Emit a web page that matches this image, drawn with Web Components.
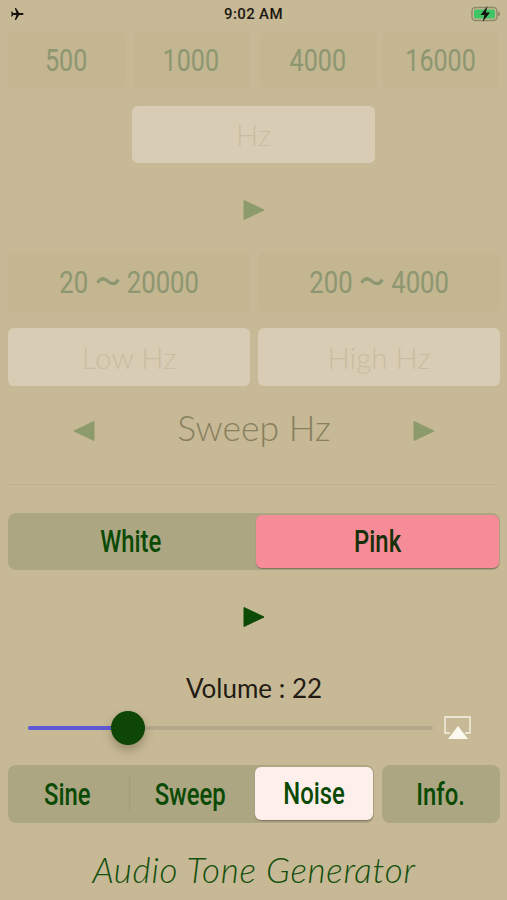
<!DOCTYPE html>
<html>
<head>
<meta charset="utf-8">
<style>
  html, body { margin: 0; padding: 0; background: #c7b995; }
  body { width: 507px; height: 900px; overflow: hidden; font-family: "Lato", "Liberation Sans", sans-serif; }
</style>
</head>
<body>
<tone-app></tone-app>
<script>
(function() {

  class StatusBar extends HTMLElement {
    constructor() {
      super();
      this.attachShadow({ mode: 'open' }).innerHTML = `
        <style>
          :host { display: flex; align-items: center; justify-content: space-between; height: 28px; padding: 0 7px 0 10px; position: relative; }
          .time { position: absolute; left: 0; right: 0; text-align: center; font: 500 15px "Roboto", sans-serif; color: #1b1712; letter-spacing: .35px; }
          svg { display: block; }
        </style>
        <svg width="14" height="14" viewBox="0 0 14 14"><path fill="#15120d" d="M13.6 7c0-.6-.8-1-1.6-1H9.2L6 1H4.800l1.600 5H3.200L2 4.500H1l.7 2.500L1 9.500h1l1.200-1.500h3.200L4.800 13H6l3.200-5H12c.8 0 1.600-.4 1.600-1z"/></svg>
        <span class="time">9:02 AM</span>
        <svg width="29" height="16" viewBox="0 0 29 16">
          <rect x="1" y="1.500" width="25" height="13" rx="3.500" fill="none" stroke="#8f8a6c" stroke-width="1.500"/>
          <rect x="3" y="3.500" width="21" height="9" rx="1.500" fill="#3fc566"/>
          <rect x="27" y="6" width="2" height="4" rx="1" fill="#8f8a6c"/>
          <path fill="#15120d" d="M16.500 0l-7 9h4l-2 7 7.500-9.500h-4.200z"/>
        </svg>`;
    }
  }

  class ToneButton extends HTMLElement {
    constructor() {
      super();
      this.attachShadow({ mode: 'open' }).innerHTML = `
        <style>
          :host { display: flex; align-items: center; justify-content: center; flex: 1 1 0; height: var(--h, 57px); border-radius: 6px; font-family: "Roboto", sans-serif; font-size: 31px; font-weight: 500; color: var(--fg, #0b4a05); background: var(--bg, transparent); white-space: nowrap; box-sizing: border-box; }
          :host([faded]) { --bg: #c3b691; --fg: #8d9670; font-weight: 400; }
          :host([selected]) { box-shadow: 0 1px 1px rgba(90,80,60,.55); }
          /* no condensed face is installed, so squeeze the text */
          span { display: inline-block; transform: scaleX(var(--squeeze, .77)); }
          :host([faded]) span { transform: scaleX(var(--squeeze, .81)); }
        </style>
        <span><slot></slot></span>`;
    }
  }

  class ToneField extends HTMLElement {
    constructor() {
      super();
      this.attachShadow({ mode: 'open' }).innerHTML = `
        <style>
          :host { display: flex; align-items: center; justify-content: center; flex: 1 1 0; height: var(--h, 57px); border-radius: 6px; background: #d8cdb4; color: #c8bda2; font: 300 29.500px "Lato", sans-serif; }
        </style>
        <slot></slot>`;
    }
  }

  class PlayArrow extends HTMLElement {
    constructor() {
      super();
      this.attachShadow({ mode: 'open' }).innerHTML = `
        <style>
          :host { display: block; width: 22px; height: 22px; color: var(--arrow, #8d9a6b); }
          :host([dir="left"]) svg { transform: scaleX(-1); }
          svg { display: block; }
        </style>
        <svg width="22" height="22" viewBox="0 0 22 22"><path fill="currentColor" stroke="currentColor" stroke-width="1" stroke-linejoin="round" d="M1 1.500v19L21 11z"/></svg>`;
    }
  }

  class VolumeSlider extends HTMLElement {
    constructor() {
      super();
      this.attachShadow({ mode: 'open' }).innerHTML = `
        <style>
          :host { display: flex; align-items: center; height: 36px; padding: 0 36px 0 28px; gap: 11px; }
          .track { flex: 1; height: 4px; border-radius: 2px; background: #b3a88c; position: relative; }
          .fill { position: absolute; left: 0; top: 0; bottom: 0; width: 100px; border-radius: 2px; background: #5f58d6; }
          .thumb { position: absolute; left: 83px; top: -15px; width: 34px; height: 34px; border-radius: 50%; background: #0d4605; box-shadow: 0 5px 10px rgba(70,60,40,.35); }
          svg { display: block; }
        </style>
        <div class="track"><div class="fill"></div><div class="thumb"></div></div>
        <svg width="27" height="24" viewBox="0 0 27 24">
          <path fill="none" stroke="#f7f3e8" stroke-width="1.300" d="M6 17H1V1h25v16h-5"/>
          <path fill="#fbf8ef" d="M14 10l10 13H4z"/>
        </svg>`;
    }
  }

  class ToneApp extends HTMLElement {
    constructor() {
      super();
      this.attachShadow({ mode: 'open' }).innerHTML = `
        <style>
          :host { display: block; padding: 0 7px 0 8px; }
          status-bar { margin: 0 -7px 0 -8px; }
          .row { display: flex; gap: 8px; }
          .center { display: flex; justify-content: center; padding-right: 1px; }
          .hz { width: 243px; margin-top: 18px; display: flex; }
          .first { margin-top: 4px; --h: 56px; gap: 0; }
          .first tone-button { flex: 0 0 117px; }
          .sweep { display: flex; align-items: center; justify-content: center; height: 44px; margin-top: 19px; padding: 0 65px; }
          .sweep span { flex: 1; text-align: center; font: 300 35.500px "Lato", sans-serif; color: #87805f; }
          .sweep play-arrow { margin-top: 8px; }
          hr { border: 0; height: 1px; background: #bdb08b; margin: 35px 4px 0 0; }
          .seg { display: flex; height: 57px; margin-top: 28px; border-radius: 8px; background: #aca683; }
          .seg.tabs { flex: 0 0 366px; height: 58px; margin: 0; }
          .white { padding-right: 3px; }
          .pink { --bg: #f58c97; --fg: #16300a; margin: 2px 1px 2px 0; --h: 53px; flex: 0 0 243px; }
          .noise { --bg: #fdf0ec; margin: 2px 1px 2px 0; --h: 53px; flex: 0 0 118px; }
          .info { --bg: #aca683; --h: 58px; flex: 0 0 118px; border-radius: 8px; }
          .play2 { --arrow: #0d4a07; }
          .volume { text-align: center; font: 400 26px "Lato", sans-serif; color: #231c13; margin-top: 45px; line-height: 30px; }
          .title { text-align: center; font: italic 300 35px "Lato", sans-serif; color: #14500e; margin-top: 26px; line-height: 40px; letter-spacing: .7px; }
          .sine { flex: 0 0 121px; padding-right: 3px; --h: 58px; }
          .sep { width: 1px; background: #a39d7b; margin: 10px 0; flex: none; }
          .sweep-tab { flex: 0 0 125px; padding-right: 4px; --h: 58px; }
        </style>
        <status-bar></status-bar>
        <div class="row first">
          <tone-button faded>500</tone-button>
          <tone-button faded style="margin-left:7.500px">1000</tone-button>
          <tone-button faded style="margin-left:10px">4000</tone-button>
          <tone-button faded style="margin-left:5.500px">16000</tone-button>
        </div>
        <div class="center"><div class="hz"><tone-field>Hz</tone-field></div></div>
        <div class="center" style="margin-top:36px"><play-arrow></play-arrow></div>
        <div class="row" style="margin-top:32px;--h:59px;--squeeze:.83">
          <tone-button faded>20 〜 20000</tone-button>
          <tone-button faded>200 〜 4000</tone-button>
        </div>
        <div class="row" style="margin-top:16px;--h:58px">
          <tone-field>Low Hz</tone-field>
          <tone-field>High Hz</tone-field>
        </div>
        <div class="sweep">
          <play-arrow dir="left"></play-arrow>
          <span>Sweep Hz</span>
          <play-arrow></play-arrow>
        </div>
        <hr>
        <div class="seg">
          <tone-button class="white">White</tone-button>
          <tone-button class="pink" selected>Pink</tone-button>
        </div>
        <div class="center play2" style="margin-top:36px"><play-arrow></play-arrow></div>
        <div class="volume">Volume : 22</div>
        <volume-slider style="margin:7px -7px 0 -8px"></volume-slider>
        <div class="row" style="margin-top:19px;gap:8px">
          <div class="seg tabs">
            <tone-button class="sine">Sine</tone-button>
            <div class="sep"></div>
            <tone-button class="sweep-tab">Sweep</tone-button>
            <tone-button class="noise" selected>Noise</tone-button>
          </div>
          <tone-button class="info">Info.</tone-button>
        </div>
        <div class="title">Audio Tone Generator</div>`;
    }
  }

  window.customElements.define('status-bar', StatusBar);
  window.customElements.define('tone-button', ToneButton);
  window.customElements.define('tone-field', ToneField);
  window.customElements.define('play-arrow', PlayArrow);
  window.customElements.define('volume-slider', VolumeSlider);
  window.customElements.define('tone-app', ToneApp);
})();
</script>
</body>
</html>
